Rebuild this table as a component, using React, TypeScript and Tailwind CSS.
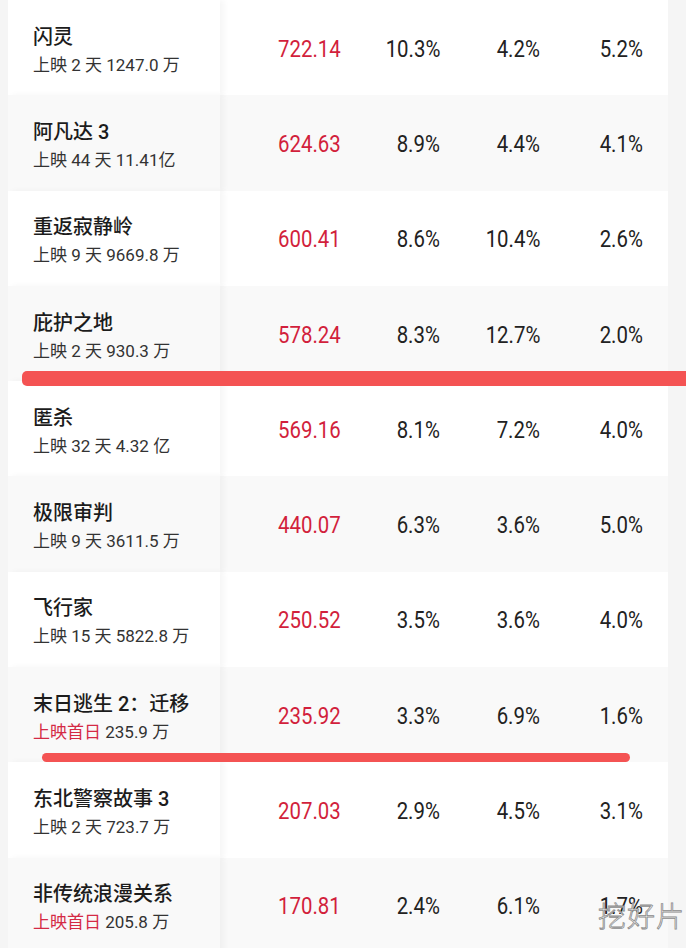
import React from "react";

type Film = {
  name: string;
  days: string;
  total: string;
  firstDay?: boolean;
  box: string;
  a: string;
  b: string;
  c: string;
};

const FILMS: Film[] = [
  { name: "闪灵", days: "上映 2 天", total: "1247.0 万", box: "722.14", a: "10.3%", b: "4.2%", c: "5.2%" },
  { name: "阿凡达 3", days: "上映 44 天", total: "11.41亿", box: "624.63", a: "8.9%", b: "4.4%", c: "4.1%" },
  { name: "重返寂静岭", days: "上映 9 天", total: "9669.8 万", box: "600.41", a: "8.6%", b: "10.4%", c: "2.6%" },
  { name: "庇护之地", days: "上映 2 天", total: "930.3 万", box: "578.24", a: "8.3%", b: "12.7%", c: "2.0%" },
  { name: "匿杀", days: "上映 32 天", total: "4.32 亿", box: "569.16", a: "8.1%", b: "7.2%", c: "4.0%" },
  { name: "极限审判", days: "上映 9 天", total: "3611.5 万", box: "440.07", a: "6.3%", b: "3.6%", c: "5.0%" },
  { name: "飞行家", days: "上映 15 天", total: "5822.8 万", box: "250.52", a: "3.5%", b: "3.6%", c: "4.0%" },
  { name: "末日逃生 2：迁移", days: "上映首日", total: "235.9 万", firstDay: true, box: "235.92", a: "3.3%", b: "6.9%", c: "1.6%" },
  { name: "东北警察故事 3", days: "上映 2 天", total: "723.7 万", box: "207.03", a: "2.9%", b: "4.5%", c: "3.1%" },
  { name: "非传统浪漫关系", days: "上映首日", total: "205.8 万", firstDay: true, box: "170.81", a: "2.4%", b: "6.1%", c: "1.7%" },
];

const UI_FONT = "font-['Roboto','Noto_Sans_CJK_SC',sans-serif]";

// value cell: Roboto squeezed horizontally to match the narrow numeral face
function Val({ v, w, red }: { v: string; w: string; red?: boolean }) {
  return (
    <span className={`${w} text-right`}>
      <span
        className={`inline-block origin-right scale-x-[0.85] ${red ? "text-[#d21f3c]" : "text-[#222]"}`}
      >
        {v}
      </span>
    </span>
  );
}

function Row({ film, shaded }: { film: Film; shaded: boolean }) {
  const bg = shaded ? "bg-[#f9f9f9]" : "bg-white";
  return (
    <div className="flex h-[95.3px] bg-[#f5f5f5]">
      {/* fixed name column */}
      <div
        className={`ml-2 w-[212px] flex flex-col justify-center pl-[25px] pt-[5px] relative z-10 shadow-[4px_0_6px_rgba(0,0,0,0.04)] ${bg}`}
      >
        <p className="text-[20px] leading-[26px] font-medium text-[#1c1c1c] whitespace-nowrap">
          {film.name}
        </p>
        <p className="mt-[3px] text-[17px] leading-[24px] text-[#333] whitespace-nowrap">
          <span className={film.firstDay ? "text-[#d42a45]" : ""}>{film.days}</span> {film.total}
        </p>
      </div>

      {/* data columns */}
      <div className={`w-[448px] flex items-center pl-[5px] pt-[2px] text-[24px] ${bg}`}>
        <Val v={film.box} w="w-[116px]" red />
        <Val v={film.a} w="w-[99px]" />
        <Val v={film.b} w="w-[100px]" />
        <Val v={film.c} w="w-[103px]" />
      </div>
    </div>
  );
}

export default function App() {
  return (
    <div className={`relative w-[686px] h-[948px] overflow-hidden bg-[#f5f5f5] ${UI_FONT}`}>
      {FILMS.map((f, i) => (
        <Row key={f.name} film={f} shaded={i % 2 === 1} />
      ))}

      {/* hand-drawn marker lines */}
      <div className="absolute left-[22px] top-[371px] w-[680px] h-[15px] rounded-[5px] bg-[#f45353] z-20" />
      <div className="absolute left-[42px] top-[753px] w-[588px] h-[9px] rounded-full bg-[#f45353] z-20" />

      {/* watermark */}
      <div className="absolute left-[598px] top-[904px] z-20 text-[28px] leading-none font-light tracking-[1px] whitespace-nowrap text-white [-webkit-text-stroke:0.8px_#8a8a8a]">
        挖好片
      </div>
    </div>
  );
}
